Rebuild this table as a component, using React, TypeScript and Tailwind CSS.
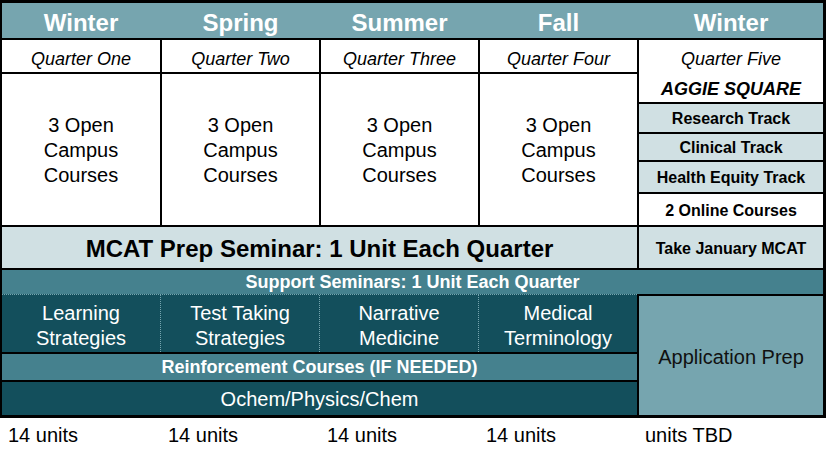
import React from 'react';

const seasons = ['Winter', 'Spring', 'Summer', 'Fall', 'Winter'];
const quarters = ['Quarter One', 'Quarter Two', 'Quarter Three', 'Quarter Four'];
const seminars = [
    ['Learning', 'Strategies'],
    ['Test Taking', 'Strategies'],
    ['Narrative', 'Medicine'],
    ['Medical', 'Terminology'],
];
const units = ['14 units', '14 units', '14 units', '14 units', 'units TBD'];

// same column widths everywhere so the black gaps line up
const cols = 'grid grid-cols-[158px_157px_157px_157px_184px] gap-x-[2px]';

export default function App() {
    return (
        <div className="w-[828px] h-[458px] bg-white font-['Liberation_Sans',Arial,sans-serif] text-black">
            <div className="w-[826px] h-[418px] bg-black pt-[3px] pl-[2px] pr-[3px] pb-[3px] flex flex-col gap-[2px]">
                {/* Seasons */}
                <div className={`${cols} h-[35px] bg-[#76a5af]`}>
                    {seasons.map((s, i) => (
                        <div key={i} className="flex items-center justify-center pt-[2px] text-[24px] font-bold text-white">
                            {s}
                        </div>
                    ))}
                </div>

                {/* Quarters + courses */}
                <div className={`${cols} h-[185px]`}>
                    {quarters.map((q) => (
                        <div key={q} className="flex flex-col gap-[2px]">
                            <div className="h-[32px] bg-white flex items-center justify-center pt-[6px] text-[18px] italic">
                                {q}
                            </div>
                            <div className="flex-1 bg-white flex items-center justify-center pt-[2px] text-center text-[20px] leading-[25px]">
                                3 Open
                                <br />
                                Campus
                                <br />
                                Courses
                            </div>
                        </div>
                    ))}
                    <div className="flex flex-col gap-[2px]">
                        <div className="h-[62px] bg-white flex flex-col items-center pt-[8px]">
                            <span className="text-[18px] italic leading-[22px]">Quarter Five</span>
                            <span className="text-[18px] italic font-bold leading-[22px] mt-[8px]">AGGIE SQUARE</span>
                        </div>
                        <div className="h-[28px] bg-[#d0e0e3] flex items-center justify-center pt-[2px] text-[16px] font-bold">
                            Research Track
                        </div>
                        <div className="h-[26px] bg-[#d0e0e3] flex items-center justify-center pt-[2px] text-[16px] font-bold">
                            Clinical Track
                        </div>
                        <div className="h-[30px] bg-[#d0e0e3] flex items-center justify-center pt-[2px] text-[16px] font-bold">
                            Health Equity Track
                        </div>
                        <div className="h-[31px] bg-white flex items-center justify-center pt-[2px] text-[16px] font-bold">
                            2 Online Courses
                        </div>
                    </div>
                </div>

                {/* MCAT */}
                <div className={`${cols} h-[41px]`}>
                    <div className="col-span-4 bg-[#d0e0e3] flex items-center justify-center pt-[2px] text-[24px] font-bold">
                        MCAT Prep Seminar: 1 Unit Each Quarter
                    </div>
                    <div className="bg-[#d0e0e3] flex items-center justify-center pt-[2px] text-[16px] font-bold">
                        Take January MCAT
                    </div>
                </div>

                {/* Support + reinforcement */}
                <div className="flex-1 flex flex-col">
                    <div className="h-[24px] bg-[#45818e] flex items-center justify-center text-[18px] font-bold text-white">
                        Support Seminars: 1 Unit Each Quarter
                    </div>
                    <div className={`${cols} flex-1`}>
                        <div className="col-span-4 flex flex-col gap-[2px]">
                            <div className="h-[58px] bg-[#134f5c] border-t border-dotted border-[#76a5af] grid grid-cols-[159px_159px_159px_1fr]">
                                {seminars.map((s, i) => (
                                    <div
                                        key={i}
                                        className={
                                            i < 3
                                                ? 'border-r border-dotted border-[#76a5af] flex items-center justify-center pt-[4px] text-center text-white text-[20px] leading-[25px]'
                                                : 'flex items-center justify-center pt-[4px] text-center text-white text-[20px] leading-[25px]'
                                        }
                                    >
                                        {s[0]}
                                        <br />
                                        {s[1]}
                                    </div>
                                ))}
                            </div>
                            <div className="h-[26px] bg-[#45818e] flex items-center justify-center text-[18px] font-bold text-white">
                                Reinforcement Courses (IF NEEDED)
                            </div>
                            <div className="flex-1 bg-[#134f5c] flex items-center justify-center text-[20px] text-white">
                                Ochem/Physics/Chem
                            </div>
                        </div>
                        <div className="border-t-2 border-black bg-[#76a5af] flex items-center justify-center pt-[2px] text-[20px] text-[#111]">
                            Application Prep
                        </div>
                    </div>
                </div>
            </div>

            {/* Units */}
            <div className={`${cols} pl-[2px] pt-[6px]`}>
                {units.map((u, i) => (
                    <div key={i} className="pl-[6px] text-[20px] leading-[23px]">
                        {u}
                    </div>
                ))}
            </div>
        </div>
    );
}
